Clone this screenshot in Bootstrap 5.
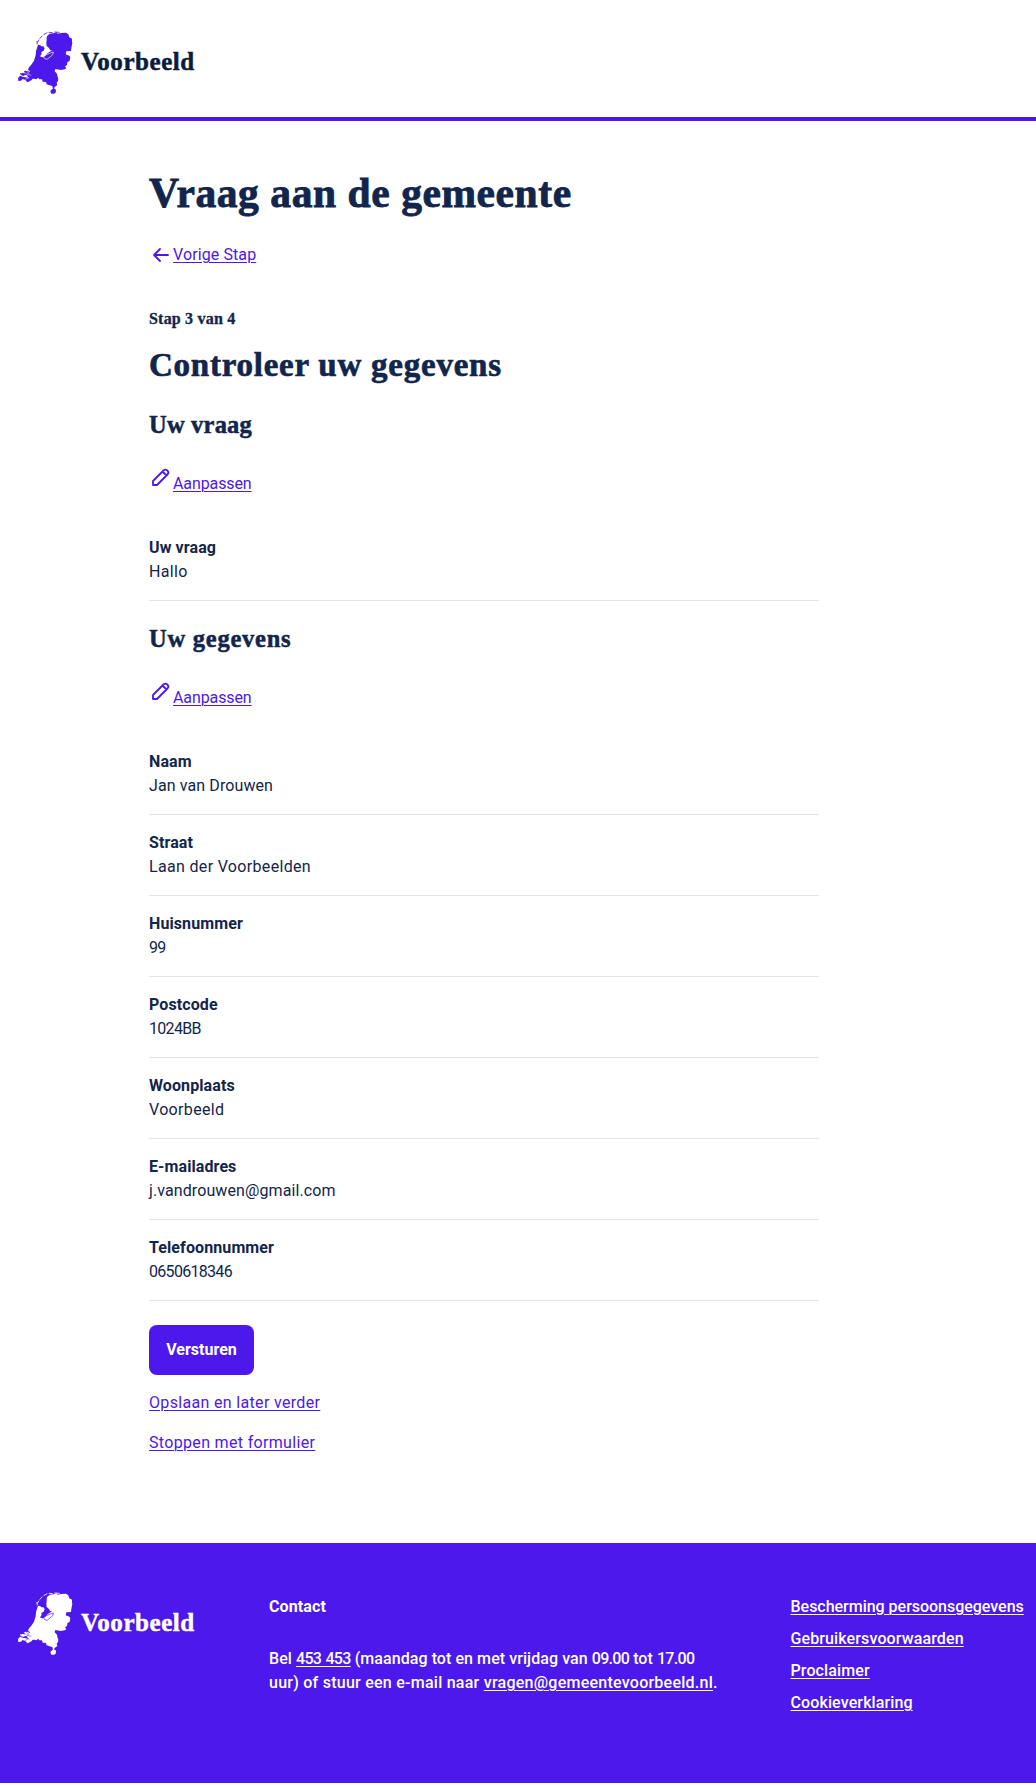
<!DOCTYPE html>
<html lang="nl">
<head>
<meta charset="utf-8">
<meta name="viewport" content="width=device-width, initial-scale=1">
<title>Vraag aan de gemeente - Voorbeeld</title>
<link href="https://cdn.jsdelivr.net/npm/bootstrap@5.3.0/dist/css/bootstrap.min.css" rel="stylesheet">
<style>
:root { --brand: #4c18ec; --ink: #12254c; }
body { font-family: Roboto, "Noto Sans", sans-serif; font-size: 16px; line-height: 24px; color: var(--ink); letter-spacing: .1px; }
a { color: var(--brand); text-decoration: underline; text-underline-offset: 2px; text-decoration-thickness: 1px; }
a:hover { color: #2f0ba8; }
h1, h2, h3, .step-label, .logo-text { font-family: "Liberation Serif", serif; font-weight: 700; margin: 0; -webkit-text-stroke: .02em currentColor; }
.site-header { height: 121px; border-bottom: 4px solid var(--brand); padding: 29px 16px 0; }
.logo-map { width: 60px; height: 68px; fill: currentColor; color: var(--brand); flex: none; }
.logo-text { font-size: 25px; line-height: 30px; padding-bottom: 2px; letter-spacing: .55px; color: #0a1c3c; margin-left: 5px; }
.form-page { width: 670px; margin-left: 149px; padding-top: 48px; padding-bottom: 88px; }
h1 { font-size: 41.5px; line-height: 48px; letter-spacing: .57px; }
h2 { font-size: 33px; line-height: 40px; letter-spacing: .76px; margin-top: 14px; }
h3 { font-size: 24.5px; line-height: 32px; letter-spacing: .2px; }
h3.wide-title { letter-spacing: .75px; }
.back-link { margin-top: 26px; }
.step-label { line-height: 24px; margin-top: 40px; letter-spacing: .2px; }
.edit-link { height: 31px; }
.edit-link svg { margin-bottom: 7px; }
.edit-link a { letter-spacing: -.1px; }
.ui-icon { width: 24px; height: 24px; flex: none; fill: none; stroke: var(--brand); stroke-width: 1.8; stroke-linecap: round; stroke-linejoin: round; }
.summary { margin: 24px 0 0; }
.summary-item { padding: 16px 0 16px; border-bottom: 1px solid #e4e5ea; }
.summary-item dd { margin: 0; }
.digits { letter-spacing: -.7px; word-spacing: 1px; }
.btn-brand { --bs-btn-color: #fff; --bs-btn-bg: var(--brand); --bs-btn-hover-color: #fff; --bs-btn-hover-bg: #3b0fc4; width: 105px; height: 50px; border: 0; border-radius: 8px; font-weight: 700; padding: 0; }
.form-link { letter-spacing: .33px; }
.second-section { margin-top: 22px; }
.site-footer { height: 240px; background: var(--brand); color: #fff; font-weight: 500; padding: 47px 0 0 16px; }
.site-footer .logo-map, .site-footer .logo-text, .site-footer a { color: #fff; }
.footer-logo { width: 253px; height: 68px; flex: none; }
.footer-contact { width: 521.5px; flex: none; padding-top: 5px; }
.contact-title { margin-bottom: 28px; }
.hours-line { letter-spacing: .07px; }
.mail-line { letter-spacing: .25px; }
.footer-links { padding-top: 5px; letter-spacing: -.02px; white-space: nowrap; }
.footer-links .spaced { letter-spacing: .12px; }
.on-light { --map-water: #fff; }
.on-brand { --map-water: #4c18ec; }
</style>
</head>
<body class="bg-white">
<svg class="d-none" aria-hidden="true">
  <symbol id="map" viewBox="18 12 180 204">
    <path d="M110 37L113 31L120 26L134 24L140 22L143 26L154 24L168 23L175 28L178 37L186 41L186 50L187 55L185 63L183 78L169 79L167 88L178 92L181 96L179 107L172 112L171 120L165 124L169 130L164 133L153 135L136 132L134 139L141 146L143 156L145 162L144 168L140 173L142 180L134 186L132 190L138 194L137 203L132 206L124 206L121 198L126 193L129 191L127 183L119 181L110 178L108 171L98 170L96 163L88 163L85 158L79 163L73 161L68 161L63 167L57 164L52 160L53 151L54 146L60 138L54 135L56 128L65 118L72 107L77 91L78 79L82 65L84 59L91 60L93 64L100 64L104 70L101 77L94 81L95 87L90 94L96 97L105 96L112 85L123 78L127 77L120 75L117 69L110 63L109 54L110 45Z"/>
    <path d="M55 138L45 137L41 141L48 144L58 143ZM54 145L43 145L36 144L31 149L40 153L48 150L57 154ZM30 152L24 160L25 168L33 167L38 162L47 166L52 172L61 168L60 161L48 157L40 156ZM34 145L30 144L33 151Z"/>
    <path d="M81 58L82 52L87 44M89 41L97 32M101 29L112 23M116 22L128 23M133 21L149 22M81 53L81 48" fill="none" stroke="currentColor" stroke-width="2.5"/>
    <path d="M101 95L109 89L119 85L130 81L129 88L120 96L111 103L104 101Z" fill="currentColor" stroke="var(--map-water)" stroke-width="2"/>
    <path d="M49 138L59 147M43 151L58 160M44 164L56 158M50 148L64 151" fill="none" stroke="var(--map-water)" stroke-width="1.5"/>
  </symbol>
  <symbol id="pencil" viewBox="0 0 24 24">
    <path d="M4 20h4L18.5 9.5a2.83 2.83 0 0 0-4-4L4 16v4M13.5 6.5l4 4"/>
  </symbol>
  <symbol id="arrow-left" viewBox="0 0 24 24">
    <path d="M5 12h14M5 12l6 6M5 12l6-6"/>
  </symbol>
</svg>

<header class="site-header">
  <div class="d-flex align-items-center on-light">
    <svg class="logo-map" role="img" aria-label="Nederland"><use href="#map"/></svg>
    <span class="logo-text">Voorbeeld</span>
  </div>
</header>

<main class="form-page">
  <h1>Vraag aan de gemeente</h1>
  <div class="back-link d-flex align-items-center"><svg class="ui-icon"><use href="#arrow-left"/></svg><a href="#">Vorige Stap</a></div>
  <p class="step-label">Stap 3 van 4</p>
  <h2>Controleer uw gegevens</h2>

  <section class="mt-4">
    <h3>Uw vraag</h3>
    <div class="edit-link d-flex align-items-end mt-4"><svg class="ui-icon"><use href="#pencil"/></svg><a href="#">Aanpassen</a></div>
    <dl class="summary">
      <div class="summary-item"><dt>Uw vraag</dt><dd class="form-link">Hallo</dd></div>
    </dl>
  </section>

  <section class="second-section">
    <h3 class="wide-title">Uw gegevens</h3>
    <div class="edit-link d-flex align-items-end mt-4"><svg class="ui-icon"><use href="#pencil"/></svg><a href="#">Aanpassen</a></div>
    <dl class="summary">
      <div class="summary-item"><dt>Naam</dt><dd>Jan van Drouwen</dd></div>
      <div class="summary-item"><dt>Straat</dt><dd class="form-link">Laan der Voorbeelden</dd></div>
      <div class="summary-item"><dt>Huisnummer</dt><dd class="digits">99</dd></div>
      <div class="summary-item"><dt>Postcode</dt><dd class="digits">1024BB</dd></div>
      <div class="summary-item"><dt>Woonplaats</dt><dd class="form-link">Voorbeeld</dd></div>
      <div class="summary-item"><dt>E-mailadres</dt><dd>j.vandrouwen@gmail.com</dd></div>
      <div class="summary-item"><dt>Telefoonnummer</dt><dd class="digits">0650618346</dd></div>
    </dl>
  </section>

  <div class="d-flex flex-column align-items-start mt-4">
    <button type="button" class="btn btn-brand">Versturen</button>
    <a class="form-link mt-3" href="#">Opslaan en later verder</a>
    <a class="form-link mt-3" href="#">Stoppen met formulier</a>
  </div>
</main>

<footer class="site-footer d-flex align-items-start">
  <div class="footer-logo d-flex align-items-center on-brand">
    <svg class="logo-map" role="img" aria-label="Nederland"><use href="#map"/></svg>
    <span class="logo-text">Voorbeeld</span>
  </div>
  <div class="footer-contact">
    <p class="fw-bold contact-title">Contact</p>
    <p class="mb-0"><span class="hours-line">Bel <a class="digits" href="#">453 453</a> (maandag tot en met vrijdag van <span class="digits">09.00</span> tot <span class="digits">17.00</span></span><br>
      <span class="mail-line">uur) of stuur een e-mail naar <a href="#">vragen@gemeentevoorbeeld.nl</a>.</span></p>
  </div>
  <nav class="footer-links d-flex flex-column align-items-start gap-2" aria-label="Juridisch">
    <a href="#">Bescherming persoonsgegevens</a>
    <a class="spaced" href="#">Gebruikersvoorwaarden</a>
    <a class="spaced" href="#">Proclaimer</a>
    <a class="spaced" href="#">Cookieverklaring</a>
  </nav>
</footer>
<script src="https://cdn.jsdelivr.net/npm/bootstrap@5.3.0/dist/js/bootstrap.bundle.min.js"></script>
</body>
</html>
